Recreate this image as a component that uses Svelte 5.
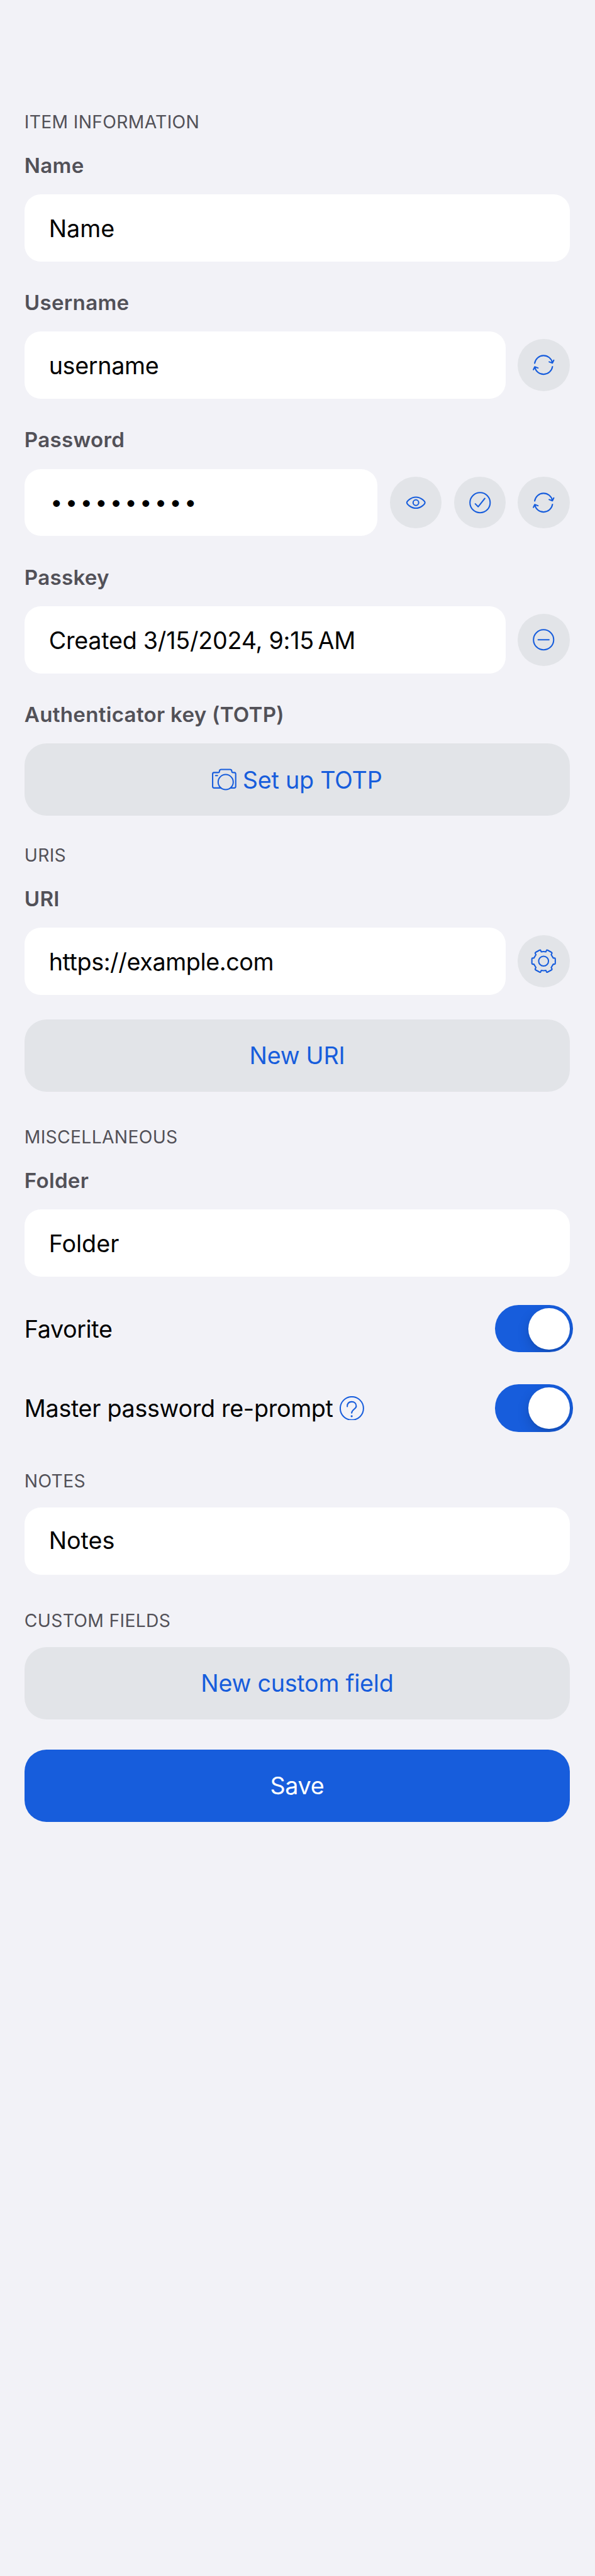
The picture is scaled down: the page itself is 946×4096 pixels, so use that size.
<script>
  let favorite = $state(true);
  let reprompt = $state(true);
  const dots = Array.from({ length: 10 }, () => '•');
</script>

{#snippet refresh()}
  <svg viewBox="0 0 306 306"><path d="M100.500 143A53 53 0 0 1 205 141M186 135l19 7l8-17M205.500 163A53 53 0 0 1 101 165M120 171l-19-7l-8 17" /></svg>
{/snippet}

{#snippet toggle(on)}
  <span class="toggle" class:on><span class="knob"></span></span>
{/snippet}

<main>
  <h2>ITEM INFORMATION</h2>

  <label for="name">Name</label>
  <div class="row"><div class="box" id="name"><span class="t">Name</span></div></div>

  <label for="user" class="next">Username</label>
  <div class="row">
    <div class="box" id="user"><span class="t tight">username</span></div>
    <button class="round" aria-label="Generate username">{@render refresh()}</button>
  </div>

  <label for="pass" class="next">Password</label>
  <div class="row">
    <div class="box" id="pass"><span class="dots">{#each dots as d}<i>{d}</i>{/each}</span></div>
    <button class="round" aria-label="Show password">
      <svg viewBox="0 0 306 306"><path d="M99.500 153C99.500 146 122 120.500 153 120.500S206.500 146 206.500 153S184 185.500 153 185.500S99.500 160 99.500 153Z" /><circle cx="153" cy="153" r="16.500" /></svg>
    </button>
    <button class="round" aria-label="Check password">
      <svg viewBox="0 0 306 306"><circle cx="153" cy="153" r="59.500" /><path d="M125 160l17 17l39-49" /></svg>
    </button>
    <button class="round" aria-label="Generate password">{@render refresh()}</button>
  </div>

  <label for="passkey" class="next">Passkey</label>
  <div class="row">
    <div class="box" id="passkey"><span class="t snug">Created 3/15/2024, 9:15&#x202f;AM</span></div>
    <button class="round" aria-label="Remove passkey">
      <svg viewBox="0 0 306 306"><circle cx="153" cy="153" r="59.500" /><path d="M121 153h64" /></svg>
    </button>
  </div>

  <label for="totp" class="next">Authenticator key (TOTP)</label>
  <button class="btn" id="totp">
    <svg class="icon" viewBox="24 42 144 144"><path d="M77 164H37Q28 164 28 155V82Q28 73 37 73H60Q68 73 68 66Q68 55 79 55H130Q141 55 141 66Q141 73 148 73H155Q164 73 164 82V155Q164 164 155 164H133M45.500 91H56.500" /><circle cx="105" cy="129.500" r="44.500" /></svg>
    <span class="t snug">Set up TOTP</span>
  </button>

  <h2 class="after-button">URIS</h2>

  <label for="uri">URI</label>
  <div class="row">
    <div class="box" id="uri"><span class="t tighter">https://example.com</span></div>
    <button class="round" aria-label="URI options">
      <svg viewBox="0 0 306 306"><path d="M139 98Q153 95 167 98L170 90Q172 85 176 88L200 101Q204 104 202 108L198 115L210 135H217Q222 135 222 140V166Q222 171 217 171H210L198 191L202 198Q204 202 200 205L176 218Q172 221 170 216L167 208Q153 211 139 208L136 216Q134 221 130 218L106 205Q102 202 104 198L108 191L96 171H89Q84 171 84 166V140Q84 135 89 135H96L108 115L104 108Q102 104 106 101L130 88Q134 85 136 90Z" /><circle cx="153" cy="153" r="29" /></svg>
    </button>
  </div>
  <button class="btn new-uri"><span class="t snug">New URI</span></button>

  <h2 class="wide">MISCELLANEOUS</h2>

  <label for="folder">Folder</label>
  <div class="row"><div class="box" id="folder"><span class="t">Folder</span></div></div>

  <div class="switch first">
    <span class="t tighter">Favorite</span>
    {@render toggle(favorite)}
  </div>
  <div class="switch">
    <span class="help">
      <span class="t tight">Master password re-prompt</span>
      <svg class="icon" viewBox="0 0 144 144"><circle cx="72" cy="72" r="68.500" /><path d="M45 61C45 42 55 33 71 33S98 43 98 58C98 76 71 78 71 99" /><circle class="solid" cx="71" cy="118" r="6" /></svg>
    </span>
    {@render toggle(reprompt)}
  </div>

  <h2 class="notes">NOTES</h2>
  <div class="row direct"><div class="box raised"><span class="t">Notes</span></div></div>

  <h2 class="wide">CUSTOM FIELDS</h2>
  <button class="btn direct"><span class="t snug">New custom field</span></button>
  <button class="btn save"><span class="t tighter">Save</span></button>
</main>

<style>
  /* 1rem is 100 units of a 1170 x 5064 canvas */
  :global(html) { font-size: calc(100vh / 50.64); }
  :global(body) { margin: 0; background: #f2f2f7; }
  main {
    box-sizing: border-box;
    width: 100vw;
    min-height: 100vh;
    padding: 2.18rem .495rem 0 .48rem;
    display: flex;
    flex-direction: column;
    background: #f2f2f7;
    font-family: Inter, "Liberation Sans", sans-serif;
    overflow: hidden;
  }
  h2 {
    margin: 0 0 .4rem;
    padding-top: .02rem;
    font-size: .35rem;
    line-height: .4rem;
    font-weight: 400;
    letter-spacing: .011em;
    color: #525158;
  }
  h2.after-button { margin-top: .56rem; }
  h2.wide { margin-top: .68rem; }
  h2.notes { margin-top: .75rem; }
  h2:has(+ .direct) { margin-bottom: .32rem; }
  label {
    display: block;
    margin-bottom: .32rem;
    font-size: .41rem;
    line-height: .5rem;
    font-weight: 600;
    letter-spacing: .008em;
    color: #525158;
  }
  label.next { margin-top: .56rem; }
  .row { display: flex; align-items: center; gap: .24rem; }
  .box {
    box-sizing: border-box;
    flex: 1;
    height: 1.32rem;
    padding: .02rem .48rem 0;
    display: flex;
    align-items: center;
    border-radius: .32rem;
    background: #fff;
    color: #000;
  }
  .box.raised { padding: 0 .48rem .03rem; }
  .t { font-size: .466rem; line-height: .6rem; white-space: nowrap; }
  .snug { letter-spacing: -.0066em; }
  .tight { letter-spacing: -.0084em; }
  .tighter { letter-spacing: -.0105em; }
  .dots { display: flex; padding: 0 0 .03rem .005rem; font-size: .43rem; line-height: .6rem; }
  .dots i { width: .2925rem; text-align: center; font-style: normal; }
  button { border: 0; padding: 0; margin: 0; font-family: inherit; color: #175ddc; background: #e2e4e8; }
  .round { flex: none; width: 1.02rem; height: 1.02rem; border-radius: 50%; }
  svg {
    display: block;
    fill: none;
    stroke: #175ddc;
    stroke-width: 7.6;
    stroke-linecap: round;
    stroke-linejoin: round;
  }
  .round svg { width: 100%; height: 100%; }
  .icon { flex: none; width: .48rem; height: .48rem; }
  .solid { fill: #175ddc; stroke: none; }
  .btn {
    width: 100%;
    height: 1.42rem;
    display: flex;
    align-items: center;
    justify-content: center;
    gap: .12rem;
    border-radius: .43rem;
  }
  .new-uri { margin-top: .48rem; }
  .save { margin-top: .6rem; background: #175ddc; color: #fff; }
  .switch { display: flex; align-items: center; justify-content: space-between; height: .93rem; margin-top: .63rem; color: #000; }
  .switch.first { margin-top: .56rem; }
  .help { display: flex; align-items: center; gap: .13rem; }
  .toggle {
    box-sizing: border-box;
    display: flex;
    width: 1.53rem;
    height: .93rem;
    margin-right: -.06rem;
    padding: .06rem;
    border-radius: .465rem;
    background: #c7c7cc;
    overflow: hidden;
  }
  .toggle.on { justify-content: flex-end; background: #175ddc; }
  .knob { width: .81rem; height: .81rem; border-radius: 50%; background: #fff; box-shadow: 0 .09rem .24rem rgba(0, 0, 0, .15), 0 .03rem .03rem rgba(0, 0, 0, .06); }
</style>
